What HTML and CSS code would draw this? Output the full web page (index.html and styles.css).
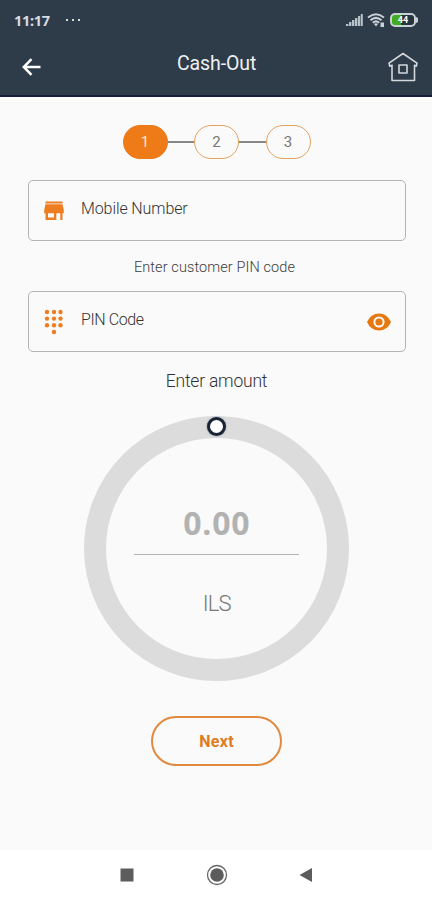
FILE: index.html
```html
<!DOCTYPE html>
<html lang="en">
<head>
<meta charset="utf-8">
<title>Cash-Out</title>
<link rel="stylesheet" href="styles.css">
</head>
<body>
<header class="header">
  <div class="status">
    <span class="time">11:17</span>
    <span class="dots"><i></i><i></i><i></i></span>
    <svg class="signal" width="18" height="14" viewBox="0 0 18 14"><path d="M1 13v-2h2.400v2zM4 13v-4h2.400v4zM7 13V7h2.400v6zM10 13V5h2.400v8zM13 13V3h2.200v10zM15.800 13V1h2v12z" fill="#b9c2c9"/></svg>
    <svg class="wifi" width="18" height="14" viewBox="0 0 18 14"><g fill="none" stroke="#c9d0d6" stroke-width="2"><path d="M1 4.500Q9-2 17 4.500M3.500 7.200Q9 2.500 14.500 7.200M5.800 9.800Q9 7 12.200 9.800"/></g><path d="M7 11l2 2.500 2-2.500q-2-1.500-4 0zM13.500 9.500h3.500v4.500h-3.500z" fill="#c9d0d6"/></svg>
    <div class="battery"><div class="battery-cell"><span>44</span></div><b></b></div>
  </div>
  <div class="bar">
    <svg class="back" width="20" height="20" viewBox="0 0 20 20"><path d="M18.500 10H2.500M9.500 2.200L1.800 10l7.700 7.800" fill="none" stroke="#fff" stroke-width="2.500"/></svg>
    <h1>Cash-Out</h1>
    <svg class="home" width="30" height="30" viewBox="0 0 30 30" fill="none" stroke="#d3d8dc" stroke-width="1.600" stroke-linejoin="round"><path d="M4 13.200v15.300h22.500V13.200l1.800 1 .7-3L15 1.500 1 11.200l.8 3z"/><rect x="11" y="13" width="8" height="8"/></svg>
  </div>
</header>
<main>
  <div class="steps">
    <span class="step active">1</span><span class="link"></span><span class="step">2</span><span class="link"></span><span class="step">3</span>
  </div>
  <div class="field">
    <svg class="lead" width="20" height="20" viewBox="0 0 20 20" fill="#ee7d22"><path d="M1.500 .5h17v2h-17zM1.500 3.300h17l1.300 6v3h-1.300v6.700h-2.200v-6.700h-4v6.700H1.500v-6.700H.2v-3zM4 12.300v4.200h6v-4.200z" fill-rule="evenodd"/></svg>
    <span class="label mobile">Mobile Number</span>
  </div>
  <p class="hint">Enter customer PIN code</p>
  <div class="field">
    <svg class="lead pad" width="20" height="26" viewBox="0 0 20 26" fill="#ee7d22"><circle cx="3" cy="3" r="2.200"/><circle cx="10" cy="3" r="2.200"/><circle cx="16.500" cy="3" r="2.200"/><circle cx="3" cy="9.600" r="2.200"/><circle cx="10" cy="9.600" r="2.200"/><circle cx="16.500" cy="9.600" r="2.200"/><circle cx="3" cy="16.300" r="2.200"/><circle cx="10" cy="16.300" r="2.200"/><circle cx="16.500" cy="16.300" r="2.200"/><circle cx="10" cy="23" r="2.200"/></svg>
    <span class="label pin">PIN Code</span>
    <svg class="eye" width="24" height="18" viewBox="0 0 24 18"><path d="M0 9Q3.800.5 12 .5T24 9Q20.200 17.500 12 17.500T0 9z" fill="#e6780f"/><circle cx="12" cy="9" r="4.600" fill="#e6780f" stroke="#fafafa" stroke-width="2"/></svg>
  </div>
  <p class="amount-label">Enter amount</p>
  <div class="dial">
    <span class="knob"></span>
    <strong class="amount">0.00</strong>
    <span class="rule"></span>
    <span class="currency">ILS</span>
  </div>
  <button class="next">Next</button>
</main>
<nav class="nav">
  <svg width="14" height="14" viewBox="0 0 14 14"><path d="M.5.500h13v13H.5z" fill="#5c5c5c"/></svg>
  <svg width="22" height="22" viewBox="0 0 22 22"><circle cx="11" cy="11" r="9.500" fill="none" stroke="#666" stroke-width="1.300"/><circle cx="11" cy="11" r="6.800" fill="#5c5c5c"/></svg>
  <svg width="14" height="16" viewBox="0 0 14 16"><path d="M.5 8L13 1v14z" fill="#5c5c5c"/></svg>
</nav>
</body>
</html>
```
FILE: styles.css
```css
* { box-sizing: border-box; }
body { margin: 0; width: 432px; height: 900px; background: #fafafa; font-family: Roboto, "Liberation Sans", sans-serif; color: #5b5b5b; display: flex; flex-direction: column; overflow: hidden; }
svg { display: block; flex: none; }
p, h1 { margin: 0; font-weight: 400; white-space: nowrap; }

.header { height: 97px; flex: none; background: #2e3b49; border-bottom: 2px solid #151b38; }
.status { display: flex; align-items: center; height: 39px; padding: 0 14px 0 14px; }
.time { width: 38px; font: 700 14.500px/20px "Noto Sans", sans-serif; letter-spacing: -.3px; color: #d7dce0; }
.dots { display: flex; gap: 4px; margin-left: 14px; margin-right: auto; }
.dots i { width: 2px; height: 2px; background: #d7dce0; }
.signal { margin-right: 4px; }
.wifi { margin-right: 5px; }
.battery { display: flex; align-items: center; }
.battery-cell { width: 26px; height: 14px; border: 2px solid #c9d0d6; border-radius: 5px; background: linear-gradient(90deg, #42a922 40%, #26323c 40%); color: #fff; font: 700 9px/10px Roboto, sans-serif; text-align: center; }
.battery b { width: 2px; height: 6px; background: #c9d0d6; border-radius: 0 2px 2px 0; }
.bar { display: flex; height: 56px; padding: 0 14px 0 22px; }
.back { margin-top: 18px; }
.bar h1 { width: 80px; margin: 12px auto 0 135px; font-size: 19.500px; line-height: 26px; letter-spacing: -.1px; color: #eef0f2; }
.home { margin-top: 13px; }

main { flex: 1; display: flex; flex-direction: column; align-items: center; padding-top: 28px; }
.steps { display: flex; align-items: center; margin-left: 1px; height: 34px; }
.step { width: 45px; height: 34px; border: 1.500px solid #e3a260; border-radius: 17px; display: flex; align-items: center; justify-content: center; font-size: 15px; color: #777; }
.step.active { background: #ee7a18; border-color: #ee7a18; color: #ffe7d0; }
.link { width: 26.500px; height: 1.500px; background: #888; }
.field { width: 378px; height: 61px; margin: 21px 0 0 2px; border: 1px solid #b4b4b4; border-radius: 5px; display: flex; padding: 0 14px 0 15px; flex: none; }
.lead { margin-top: 20px; }
.pad { margin-top: 17px; }
.label { margin: 17px auto 0 17px; font-size: 16px; line-height: 22px; font-weight: 300; color: #333; white-space: nowrap; }
.mobile { letter-spacing: -.1px; }
.pin { letter-spacing: -.4px; }
.eye { margin-top: 21px; }
.hint { margin: 17px 3px 0 0; font-size: 14.500px; line-height: 20px; letter-spacing: .1px; font-weight: 300; color: #3c3c3c; }
.hint + .field { margin-top: 13px; }
.amount-label { margin: 17px 0 0 1px; font-size: 17.500px; line-height: 24px; letter-spacing: -.2px; font-weight: 300; color: #333; }
.dial { position: relative; width: 265px; height: 265px; margin: 22.500px 0 0 1.500px; border: 22px solid #dcdcdc; border-radius: 50%; display: flex; flex-direction: column; align-items: center; flex: none; }
.knob { position: absolute; top: -20.500px; left: 101px; width: 19px; height: 19px; border: 3.500px solid #1b2435; border-radius: 50%; background: #fff; box-shadow: 0 0 2px #7b8a99; }
.amount { margin-top: 65.500px; font: 700 32px/40px "Open Sans", sans-serif; letter-spacing: .8px; color: #b2b2b2; }
.rule { width: 165px; height: 1px; margin-top: 11px; background: #b4b4b4; }
.currency { margin-top: 35px; font-size: 22px; line-height: 28px; letter-spacing: -.8px; font-weight: 300; color: #777; }
.next { width: 131px; height: 50px; margin: 35.500px 0 0 1px; padding: 2px 0 0; border: 2px solid #e18a3f; border-radius: 25px; background: transparent; color: #e07c20; font: 700 16px/20px Roboto, sans-serif; letter-spacing: .3px; flex: none; }
.nav { height: 50px; flex: none; background: #fff; display: flex; align-items: center; justify-content: space-between; padding: 0 119px 0 120px; }
```
